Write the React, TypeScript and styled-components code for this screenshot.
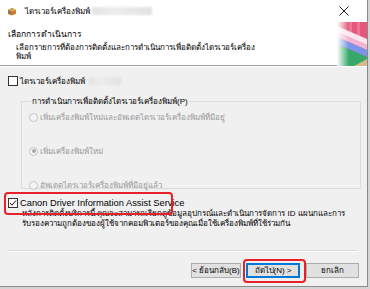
import React from "react";
import styled, { createGlobalStyle } from "styled-components";

const GlobalStyle = createGlobalStyle`
  html, body { margin: 0; padding: 0; background: #d4d4d4; }
  body { font-family: "Liberation Sans", "Noto Sans", "DejaVu Sans", sans-serif; font-size: 8px; color: #1a1a1a; }
  * { box-sizing: border-box; }
`;

const Window = styled.div`
  position: relative;
  width: 368px;
  height: 287px;
  background: #f0f0f0;
  border-right: 1px solid #8a8a8a;
  border-bottom: 1px solid #8a8a8a;
  display: flex;
  flex-direction: column;
  overflow: hidden;
`;

const TitleBar = styled.div`
  height: 22px;
  background: #fff;
  display: flex;
  align-items: center;
  padding-left: 7px;
  gap: 8px;
`;

const TitleText = styled.span`
  font-size: 8px;
  color: #000;
`;

const Blur = styled.span<{ w: number }>`
  display: inline-block;
  width: ${(p) => p.w}px;
  height: 8px;
  background: linear-gradient(90deg, #e4e4e4, #ececec 40%, #e2e2e2);
  filter: blur(1.2px);
  margin-left: 2px;
  vertical-align: middle;
`;

const Close = styled.div`
  margin-left: auto;
  width: 46px;
  height: 22px;
  display: flex;
  align-items: center;
  justify-content: center;
`;

const Header = styled.div`
  height: 44px;
  background: #fff;
  display: flex;
  border-bottom: 1px solid #a0a0a0;
`;

const HeaderTexts = styled.div`
  flex: 1;
  padding: 7px 0 0 8px;
`;

const HeaderTitle = styled.div`
  font-size: 8.5px;
  font-weight: normal;
  color: #000;
  line-height: 11px;
`;

const HeaderSub = styled.div`
  margin: 3px 0 0 8px;
  width: 250px;
  line-height: 9px;
  color: #000;
`;

const Banner = styled.svg`
  width: 30px;
  height: 44px;
  display: block;
`;

const Body = styled.div`
  flex: 1;
  display: flex;
  flex-direction: column;
  padding: 9px 6px 0 8px;
  border-top: 1px solid #fff;
`;

const CheckRow = styled.label`
  display: flex;
  align-items: center;
  gap: 2px;
  height: 10px;
  color: #000;
`;

const Box = styled.span`
  width: 10px;
  height: 10px;
  border: 1px solid #333;
  background: #fff;
  display: flex;
  align-items: center;
  justify-content: center;
`;

const Group = styled.fieldset`
  margin: 9px 0 0 13px;
  padding: 4px 0 0 7px;
  border: 1px solid #dcdcdc;
  height: 94px;
  display: flex;
  flex-direction: column;
  gap: 24px;
`;

const Legend = styled.legend`
  padding: 0 1px;
  margin-left: 2px;
  color: #000;
  font-size: 8px;
`;

const RadioRow = styled.div`
  display: flex;
  align-items: center;
  gap: 2px;
  height: 10px;
  color: #9a9a9a;
`;

const Radio = styled.span<{ on?: boolean }>`
  width: 9px;
  height: 9px;
  border-radius: 50%;
  border: 1px solid #c4c4c4;
  background: #f4f4f4;
  display: flex;
  align-items: center;
  justify-content: center;
  &::after {
    content: "";
    display: ${(p) => (p.on ? "block" : "none")};
    width: 4px;
    height: 4px;
    border-radius: 50%;
    background: #a8a8a8;
  }
`;

const CheckRow2 = styled(CheckRow)`
  margin-top: 9px;
`;

const LatinLabel = styled.span`
  font-size: 9.3px;
`;

const Desc = styled.div`
  margin: 1px 0 0 14px;
  line-height: 10px;
  color: #000;
  width: 330px;
`;

const Sep = styled.div`
  margin: auto 3px 0 0;
  border-top: 1px solid #dadada;
  border-bottom: 1px solid #fff;
`;

const ButtonBar = styled.div`
  display: flex;
  justify-content: flex-end;
  padding: 11px 2px 0 0;
  height: 34px;
`;

const Button = styled.button<{ w: number; primary?: boolean; gapLeft?: number }>`
  width: ${(p) => p.w}px;
  height: 15px;
  margin-left: ${(p) => p.gapLeft ?? 0}px;
  padding: 0;
  font-family: inherit;
  font-size: 8px;
  color: #000;
  background: #e1e1e1;
  border: 1px solid ${(p) => (p.primary ? "#0078d7" : "#adadad")};
  box-shadow: ${(p) => (p.primary ? "inset 0 0 0 1px #0078d7" : "none")};
`;

const Highlight = styled.div<{ x: number; y: number; w: number; h: number }>`
  position: absolute;
  left: ${(p) => p.x}px;
  top: ${(p) => p.y}px;
  width: ${(p) => p.w}px;
  height: ${(p) => p.h}px;
  border: 2px solid #e8202a;
  border-radius: 4px;
  pointer-events: none;
`;

function AppIcon() {
  return (
    <svg width="10" height="9" viewBox="0 0 10 9">
      <path d="M1 2.5 L5 0.8 L9 2.5 L5 4.2 Z" fill="#e6b25a" />
      <path d="M1 2.5 L5 4.2 L5 8.6 L1 6.9 Z" fill="#b8742e" />
      <path d="M9 2.5 L5 4.2 L5 8.6 L9 6.9 Z" fill="#d08a3a" />
      <rect x="2" y="4.2" width="1.4" height="1.4" fill="#3a7ad8" />
      <rect x="6.2" y="4.4" width="1.4" height="1.4" fill="#d83a3a" />
      <rect x="3.8" y="1.6" width="2.4" height="1" fill="#6ab04a" />
    </svg>
  );
}

export default function App() {
  return (
    <>
      <GlobalStyle />
      <Window>
        <TitleBar>
          <AppIcon />
          <TitleText>
            ไดรเวอร์เครื่องพิมพ์
            <Blur w={60} />
          </TitleText>
          <Close>
            <svg width="10" height="10" viewBox="0 0 10 10">
              <path d="M0.5 0.5 L9.5 9.5 M9.5 0.5 L0.5 9.5" stroke="#222" strokeWidth="1" />
            </svg>
          </Close>
        </TitleBar>
        <Header>
          <HeaderTexts>
            <HeaderTitle>เลือกการดำเนินการ</HeaderTitle>
            <HeaderSub>
              เลือกรายการที่ต้องการติดตั้งและการดำเนินการเพื่อติดตั้งไดรเวอร์เครื่อง
              พิมพ์
            </HeaderSub>
          </HeaderTexts>
          <Banner viewBox="0 0 30 44" preserveAspectRatio="none">
            <defs>
              <linearGradient id="fade" x1="0" x2="1" y1="0" y2="0">
                <stop offset="0" stopColor="#fff" stopOpacity="1" />
                <stop offset="0.4" stopColor="#fff" stopOpacity="0" />
              </linearGradient>
            </defs>
            <rect x="0" y="0" width="30" height="44" fill="#e5587c" />
            <rect x="12" y="0" width="3" height="14" fill="#ec7797" />
            <rect x="20" y="0" width="3" height="18" fill="#ec7797" />
            <polygon points="0,4 30,17 30,23 0,10" fill="#fbe6ef" />
            <polygon points="0,10 30,23 30,28 0,15" fill="#f2b6d2" />
            <polygon points="0,15 30,28 30,35 0,22" fill="#7b93e8" />
            <polygon points="0,22 30,35 30,44 0,44" fill="#35a86a" />
            <polygon points="17,44 30,37 30,44" fill="#d9b98a" />
            <rect x="0" y="0" width="30" height="44" fill="url(#fade)" />
          </Banner>
        </Header>
        <Body>
          <CheckRow>
            <Box />
            ไดรเวอร์เครื่องพิมพ์
            <Blur w={32} />
          </CheckRow>
          <Group>
            <Legend>การดำเนินการเพื่อติดตั้งไดรเวอร์เครื่องพิมพ์(P)</Legend>
            <RadioRow>
              <Radio />
              เพิ่มเครื่องพิมพ์ใหม่และอัพเดตไดรเวอร์เครื่องพิมพ์ที่มีอยู่
            </RadioRow>
            <RadioRow>
              <Radio on />
              เพิ่มเครื่องพิมพ์ใหม่
            </RadioRow>
            <RadioRow>
              <Radio />
              อัพเดตไดรเวอร์เครื่องพิมพ์ที่มีอยู่แล้ว
            </RadioRow>
          </Group>
          <CheckRow2>
            <Box>
              <svg width="8" height="8" viewBox="0 0 8 8">
                <path d="M1 4 L3 6.2 L7 1.5" stroke="#111" strokeWidth="1" fill="none" />
              </svg>
            </Box>
            <LatinLabel>Canon Driver Information Assist Service</LatinLabel>
          </CheckRow2>
          <Desc>
            หลังการติดตั้งบริการนี้ คุณจะสามารถเรียกดูข้อมูลอุปกรณ์และดำเนินการจัดการ ID แผนกและการรับรองความถูกต้องของผู้ใช้จากคอมพิวเตอร์ของคุณเมื่อใช้เครื่องพิมพ์ที่ใช้ร่วมกัน
          </Desc>
          <Sep />
          <ButtonBar>
            <Button w={50}>&lt; ย้อนกลับ(B)</Button>
            <Button w={54} primary gapLeft={5}>
              ถัดไป(N) &gt;
            </Button>
            <Button w={53} gapLeft={6}>ยกเลิก</Button>
          </ButtonBar>
        </Body>
        <Highlight x={4} y={192} w={169} h={23} />
        <Highlight x={243} y={259} w={63} h={24} />
      </Window>
    </>
  );
}
